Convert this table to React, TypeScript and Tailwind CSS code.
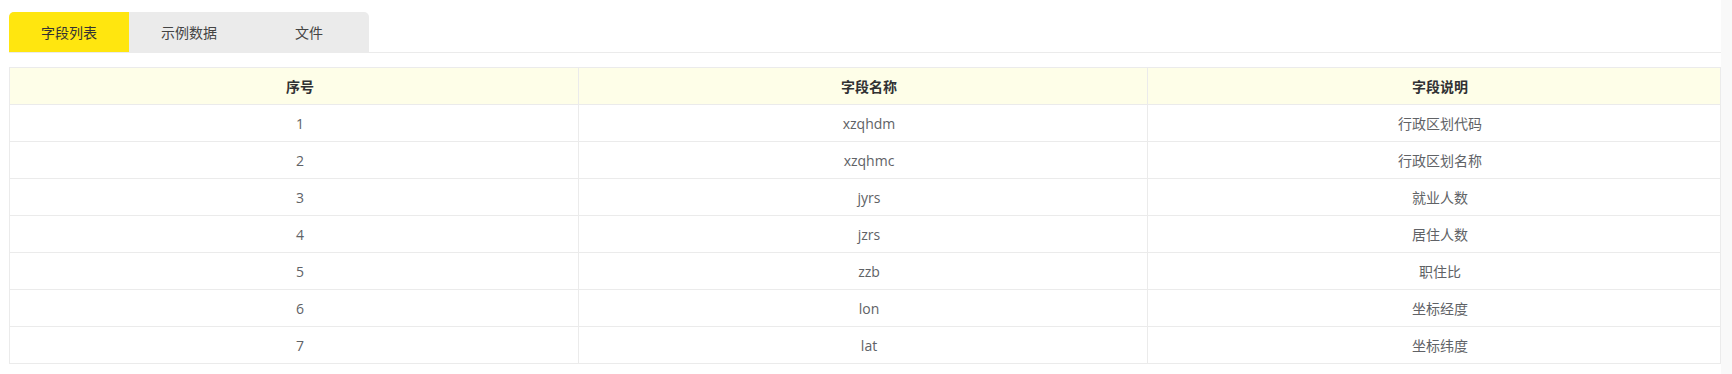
import React from "react";

const rows = [
  ["1", "xzqhdm", "行政区划代码"],
  ["2", "xzqhmc", "行政区划名称"],
  ["3", "jyrs", "就业人数"],
  ["4", "jzrs", "居住人数"],
  ["5", "zzb", "职住比"],
  ["6", "lon", "坐标经度"],
  ["7", "lat", "坐标纬度"],
];

export default function App() {
  return (
    <div
      className="flex w-[1732px] h-[374px] bg-white"
      style={{ fontFamily: '"Open Sans", "Noto Sans CJK SC", sans-serif' }}
    >
      <div className="w-[1721px] pl-[9px] pt-[12px]">
        <div className="w-[1712px] border-b border-[#ebebeb] flex">
          <div className="flex rounded-t-[5px] overflow-hidden bg-[#ebebeb]">
            <div className="w-[120px] h-[40px] flex items-center justify-center bg-[#ffe60f] text-[14px] text-[#333]">
              字段列表
            </div>
            <div className="w-[120px] h-[40px] flex items-center justify-center text-[14px] text-[#444]">
              示例数据
            </div>
            <div className="w-[120px] h-[40px] flex items-center justify-center text-[14px] text-[#444]">
              文件
            </div>
          </div>
        </div>
        <table className="mt-[14px] w-[1712px] table-fixed border-collapse border border-[#ebebeb] text-[14px]">
          <colgroup>
            <col className="w-[569px]" />
            <col className="w-[569px]" />
            <col />
          </colgroup>
          <thead>
            <tr className="bg-[#fefee8] h-[37px]">
              <th className="border border-[#ebebeb] font-bold text-[#303133] py-0 pr-0 pl-[12px]">序号</th>
              <th className="border border-[#ebebeb] font-bold text-[#303133] py-0 pr-0 pl-[12px]">字段名称</th>
              <th className="border border-[#ebebeb] font-bold text-[#303133] py-0 pr-0 pl-[12px]">字段说明</th>
            </tr>
          </thead>
          <tbody>
            {rows.map((r) => (
              <tr key={r[0]} className="h-[37px]">
                {r.map((c, i) => (
                  <td key={i} className="border border-[#ebebeb] text-center text-[#606266] py-0 pr-0 pl-[12px]">
                    {c}
                  </td>
                ))}
              </tr>
            ))}
          </tbody>
        </table>
      </div>
      <div className="w-[11px] h-full bg-[#f9f9f9]" />
    </div>
  );
}
